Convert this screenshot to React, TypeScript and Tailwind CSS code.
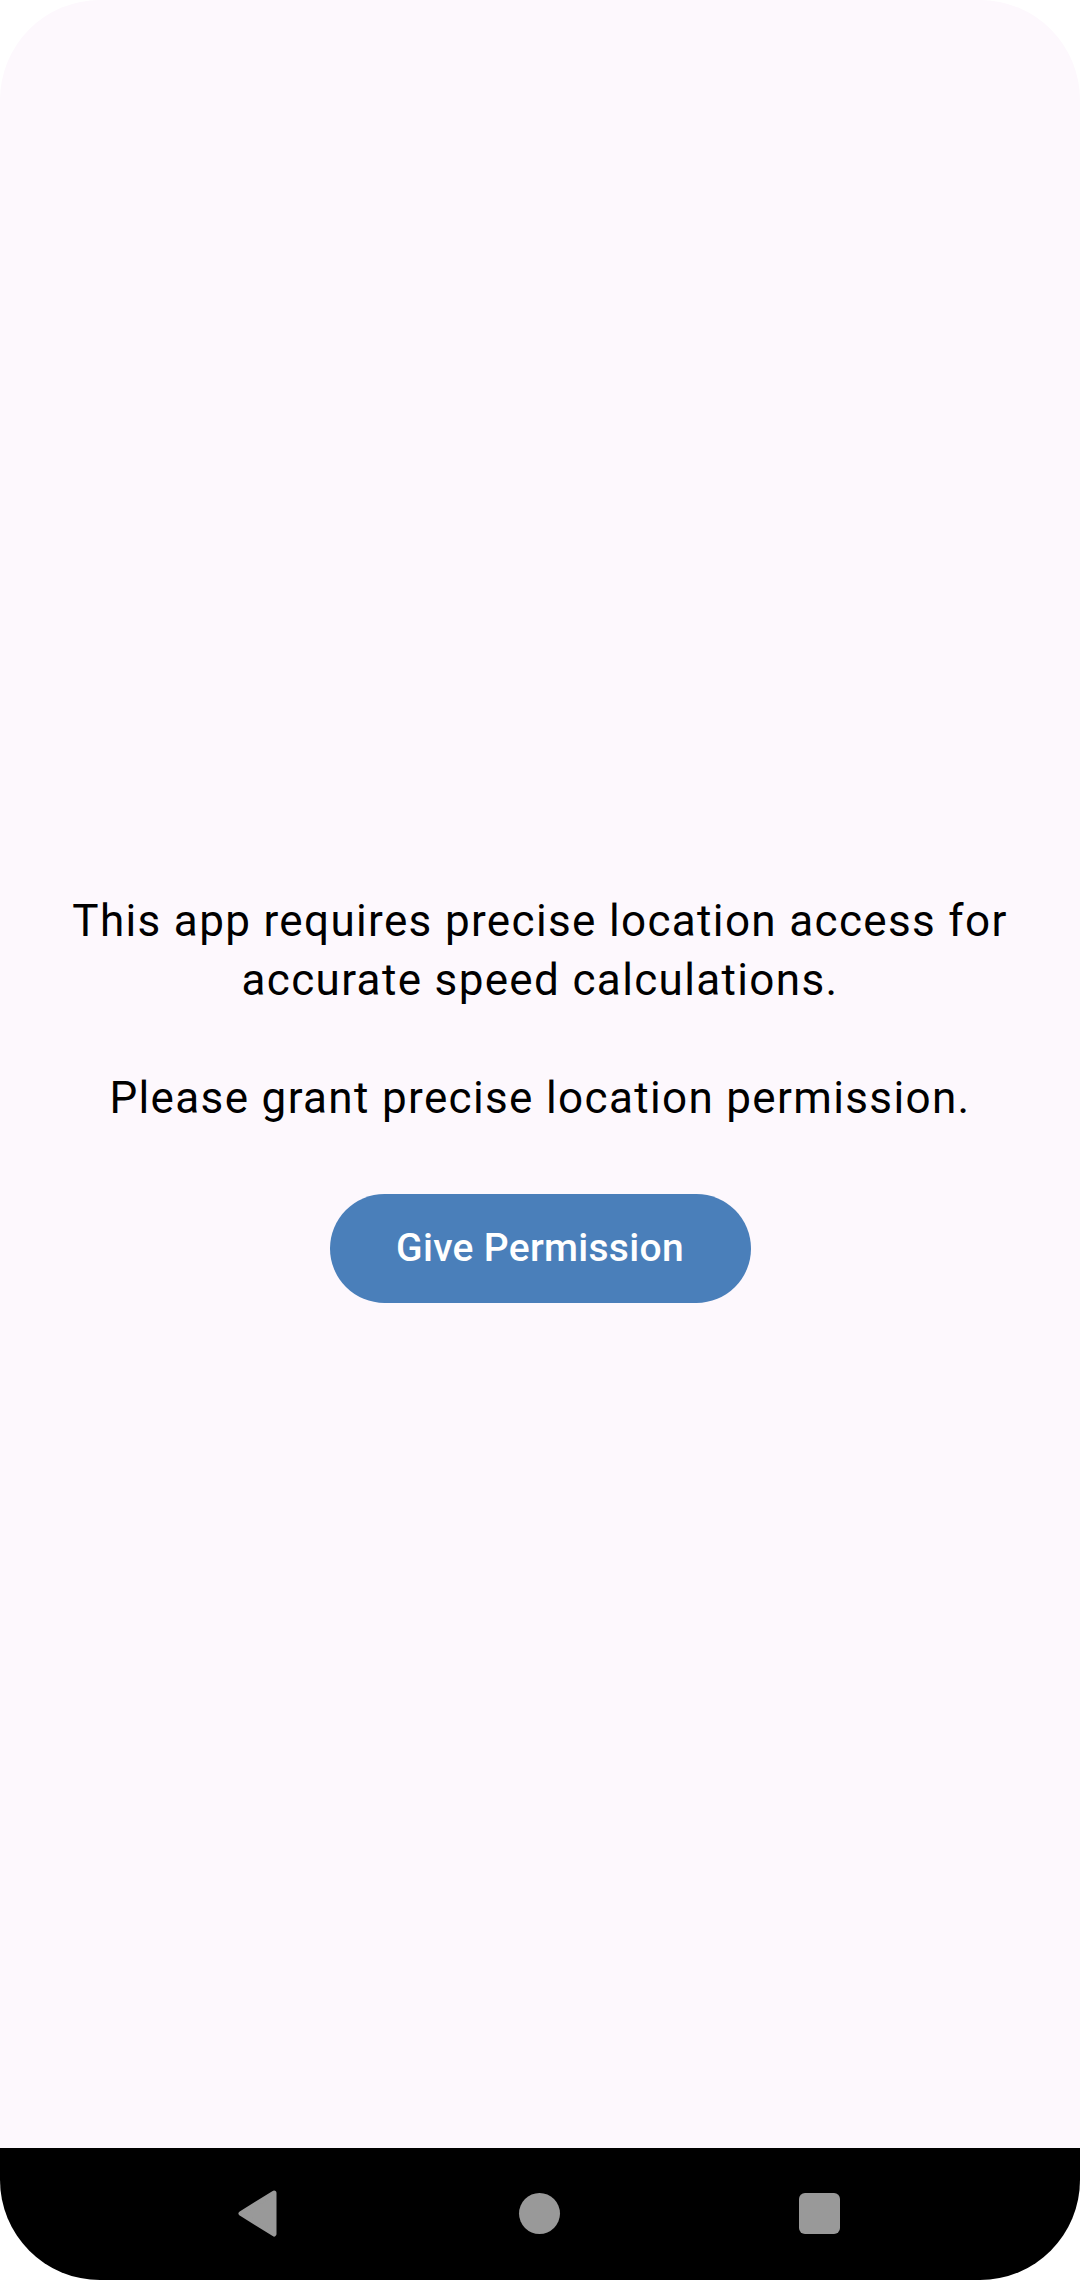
const App = () => {
  return (
    <div className="w-[1080px] h-[2280px] bg-white flex flex-col" style={{ fontFamily: "Roboto, 'Noto Sans', sans-serif" }}>
      {/* Screen content */}
      <main className="flex-1 bg-[#fdf8fd] rounded-t-[100px] flex flex-col items-center pt-[892px] px-11">
        <p className="text-[44px] leading-[59px] tracking-[1.35px] text-black text-center">
          This app requires precise location access for
          <br />
          accurate speed calculations.
          <br />
          <br />
          Please grant precise location permission.
        </p>
        <button className="mt-[66px] w-[421px] h-[109px] rounded-full bg-[#4a7fba] text-white text-[39px] font-medium tracking-[0.3px]">
          Give Permission
        </button>
      </main>

      {/* Navigation bar */}
      <nav className="h-[132px] bg-black rounded-b-[100px] flex items-center justify-center pb-[2px]">
        <div className="w-[600px] flex items-center justify-between">
          <svg width="41" height="47" viewBox="0 0 41 47" className="-ml-[2px]">
            <path d="M36 3 L3 23.5 L36 44 Z" fill="#999" stroke="#999" strokeWidth="5" strokeLinejoin="round" />
          </svg>
          <div className="w-[41px] h-[41px] rounded-full bg-[#999]" />
          <div className="w-[41px] h-[41px] rounded-[6px] bg-[#999]" />
        </div>
      </nav>
    </div>
  );
};

export default App;
